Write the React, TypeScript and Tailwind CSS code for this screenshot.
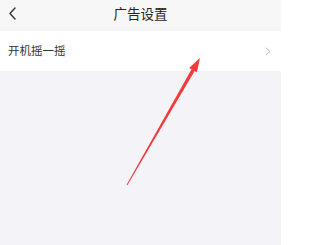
import React from 'react';

const font = { fontFamily: '"Noto Sans CJK SC", "Noto Sans", sans-serif' };

export default function App() {
  return (
    <div className="relative w-[281px] h-[245px] overflow-hidden bg-[#f4f3f7]" style={font}>
      {/* header */}
      <div className="relative h-[28px] bg-[#f7f7f7] flex items-center justify-center">
        <svg className="absolute left-[8px] top-[7px]" width="9" height="13" viewBox="0 0 9 13">
          <path d="M7 1 L2 6.5 L7 12" fill="none" stroke="#333" strokeWidth="1.4" strokeLinecap="round" strokeLinejoin="round" />
        </svg>
        <span className="text-[13.5px] leading-none text-[#222]">广告设置</span>
      </div>
      <div className="h-[3px]" />
      {/* row */}
      <div className="h-[40px] bg-white flex items-center justify-between pl-[8px] pr-[10px]">
        <span className="text-[11.5px] leading-none text-[#333]">开机摇一摇</span>
        <svg width="6" height="9" viewBox="0 0 6 9">
          <path d="M1 1 L5 4.5 L1 8" fill="none" stroke="#bdbdbd" strokeWidth="1" strokeLinecap="round" strokeLinejoin="round" />
        </svg>
      </div>
      {/* annotation arrow */}
      <svg className="absolute left-0 top-0 pointer-events-none" width="281" height="245" viewBox="0 0 281 245">
        <polygon points="127.4,185.2 126.6,184.8 192.5,67.6 195.5,69.4" fill="#f23b3b" />
        <polygon points="200,58 189.1,67.9 196.9,72.3" fill="#f23b3b" />
      </svg>
    </div>
  );
}
